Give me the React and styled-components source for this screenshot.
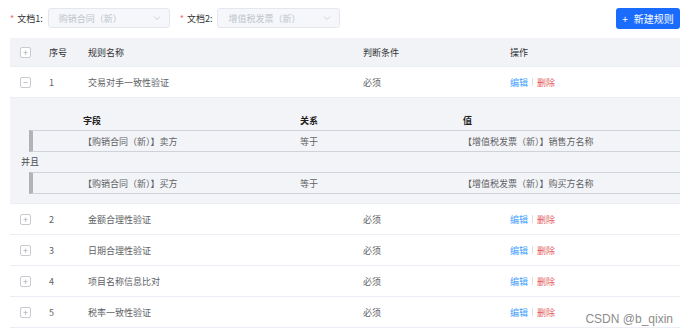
import React from 'react';
import styled, { createGlobalStyle } from 'styled-components';

const GlobalStyle = createGlobalStyle`
  body {
    margin: 0;
    background: #fff;
    font-family: "Noto Sans CJK SC", "Noto Sans", sans-serif;
  }
`;

const Page = styled.div`
  position: relative;
  width: 688px;
  height: 336px;
  padding: 7px 8px 0 10px;
  box-sizing: border-box;
  overflow: hidden;
`;

const Toolbar = styled.div`
  display: flex;
  align-items: center;
  height: 22px;
`;

const Field = styled.label`
  display: flex;
  align-items: center;
  margin-right: 10px;
  font-size: 9px;
  color: #303133;
`;

const Star = styled.span`
  color: #f56c6c;
  margin-right: 3px;
`;

const Select = styled.div`
  display: flex;
  align-items: center;
  justify-content: space-between;
  width: ${p => p.width}px;
  height: 20px;
  margin-left: 5px;
  padding: 0 8px 0 10px;
  box-sizing: border-box;
  border: 1px solid #e4e7ed;
  border-radius: 3px;
  background: #f5f7fa;
  color: #c0c4cc;
  font-size: 9px;
`;

const AddButton = styled.button`
  margin-left: auto;
  display: flex;
  align-items: center;
  justify-content: center;
  gap: 6px;
  width: 64px;
  height: 21px;
  padding: 0;
  border: none;
  border-radius: 3px;
  background: #1a6cff;
  color: #fff;
  font-family: inherit;
  font-size: 10px;
`;

const Table = styled.div`
  margin-top: 9px;
  font-size: 9px;
  color: #606266;
`;

const Row = styled.div`
  display: grid;
  grid-template-columns: 39px 39px 275px 147px 1fr;
  align-items: center;
  height: ${p => (p.head ? 28 : 30)}px;
  background: ${p => (p.head ? '#f2f3f6' : '#fff')};
  color: ${p => (p.head ? '#303133' : '#606266')};
  border-bottom: 1px solid #ebeef5;
`;

const Toggle = styled.span`
  display: flex;
  align-items: center;
  justify-content: center;
  width: 9px;
  height: 9px;
  margin-left: 10px;
  border: 1px solid #c8cbd1;
  border-radius: 2px;
  background: #fff;
  color: #a8abb2;
  font-size: 9px;
  line-height: 1;
`;

const Actions = styled.div`
  display: flex;
  align-items: center;
  gap: 4px;
`;

const Link = styled.span`
  color: ${p => (p.danger ? '#e45b5e' : '#409eff')};
`;

const Divider = styled.span`
  width: 1px;
  height: 8px;
  background: #dcdfe6;
`;

const Detail = styled.div`
  background: #f3f4f7;
  padding: 12px 0 9px 11px;
  border-bottom: 1px solid #ebeef5;
`;

const DetailHead = styled.div`
  display: grid;
  grid-template-columns: 217px 163px 1fr;
  align-items: center;
  height: 20px;
  padding-left: 62px;
  font-weight: bold;
  color: #1f1f1f;
`;

const Condition = styled.div`
  display: grid;
  grid-template-columns: 217px 163px 1fr;
  align-items: center;
  height: 20px;
  margin-left: 8px;
  padding-left: 50px;
  border-left: 4px solid #b1b3b8;
  border-top: 1px solid #cfd2d8;
  border-bottom: 1px solid #cfd2d8;
  color: #606266;
`;

const Joiner = styled.div`
  height: 20px;
  line-height: 20px;
  color: #4a4c50;
`;

const Watermark = styled.div`
  position: absolute;
  right: 15px;
  bottom: 10px;
  font-family: "Liberation Sans", sans-serif;
  font-size: 12px;
  color: #8c8c8c;
`;

const Chevron = () => (
  <svg width="8" height="8" viewBox="0 0 8 8">
    <path d="M1 2.5 L4 5.5 L7 2.5" fill="none" stroke="#c0c4cc" strokeWidth="0.8" />
  </svg>
);

const rules = [
  { id: 2, name: '金额合理性验证' },
  { id: 3, name: '日期合理性验证' },
  { id: 4, name: '项目名称信息比对' },
  { id: 5, name: '税率一致性验证' },
];

const conditions = [
  { field: '【购销合同（新）】卖方', rel: '等于', value: '【增值税发票（新）】销售方名称' },
  { field: '【购销合同（新）】买方', rel: '等于', value: '【增值税发票（新）】购买方名称' },
];

const Ops = () => (
  <Actions>
    <Link>编辑</Link>
    <Divider />
    <Link danger>删除</Link>
  </Actions>
);

export default function App() {
  return (
    <>
      <GlobalStyle />
      <Page>
        <Toolbar>
          <Field>
            <Star>*</Star>文档1:
            <Select width={122}>购销合同（新）<Chevron /></Select>
          </Field>
          <Field>
            <Star>*</Star>文档2:
            <Select width={123}>增值税发票（新）<Chevron /></Select>
          </Field>
          <AddButton>
            <span>+</span>新建规则
          </AddButton>
        </Toolbar>
        <Table>
          <Row head>
            <Toggle>+</Toggle>
            <span>序号</span>
            <span>规则名称</span>
            <span>判断条件</span>
            <span>操作</span>
          </Row>
          <Row>
            <Toggle>−</Toggle>
            <span>1</span>
            <span>交易对手一致性验证</span>
            <span>必须</span>
            <Ops />
          </Row>
          <Detail>
            <DetailHead>
              <span>字段</span>
              <span>关系</span>
              <span>值</span>
            </DetailHead>
            {conditions.map((c, i) => (
              <React.Fragment key={i}>
                {i > 0 && <Joiner>并且</Joiner>}
                <Condition>
                  <span>{c.field}</span>
                  <span>{c.rel}</span>
                  <span>{c.value}</span>
                </Condition>
              </React.Fragment>
            ))}
          </Detail>
          {rules.map(r => (
            <Row key={r.id}>
              <Toggle>+</Toggle>
              <span>{r.id}</span>
              <span>{r.name}</span>
              <span>必须</span>
              <Ops />
            </Row>
          ))}
        </Table>
        <Watermark>CSDN @b_qixin</Watermark>
      </Page>
    </>
  );
}
